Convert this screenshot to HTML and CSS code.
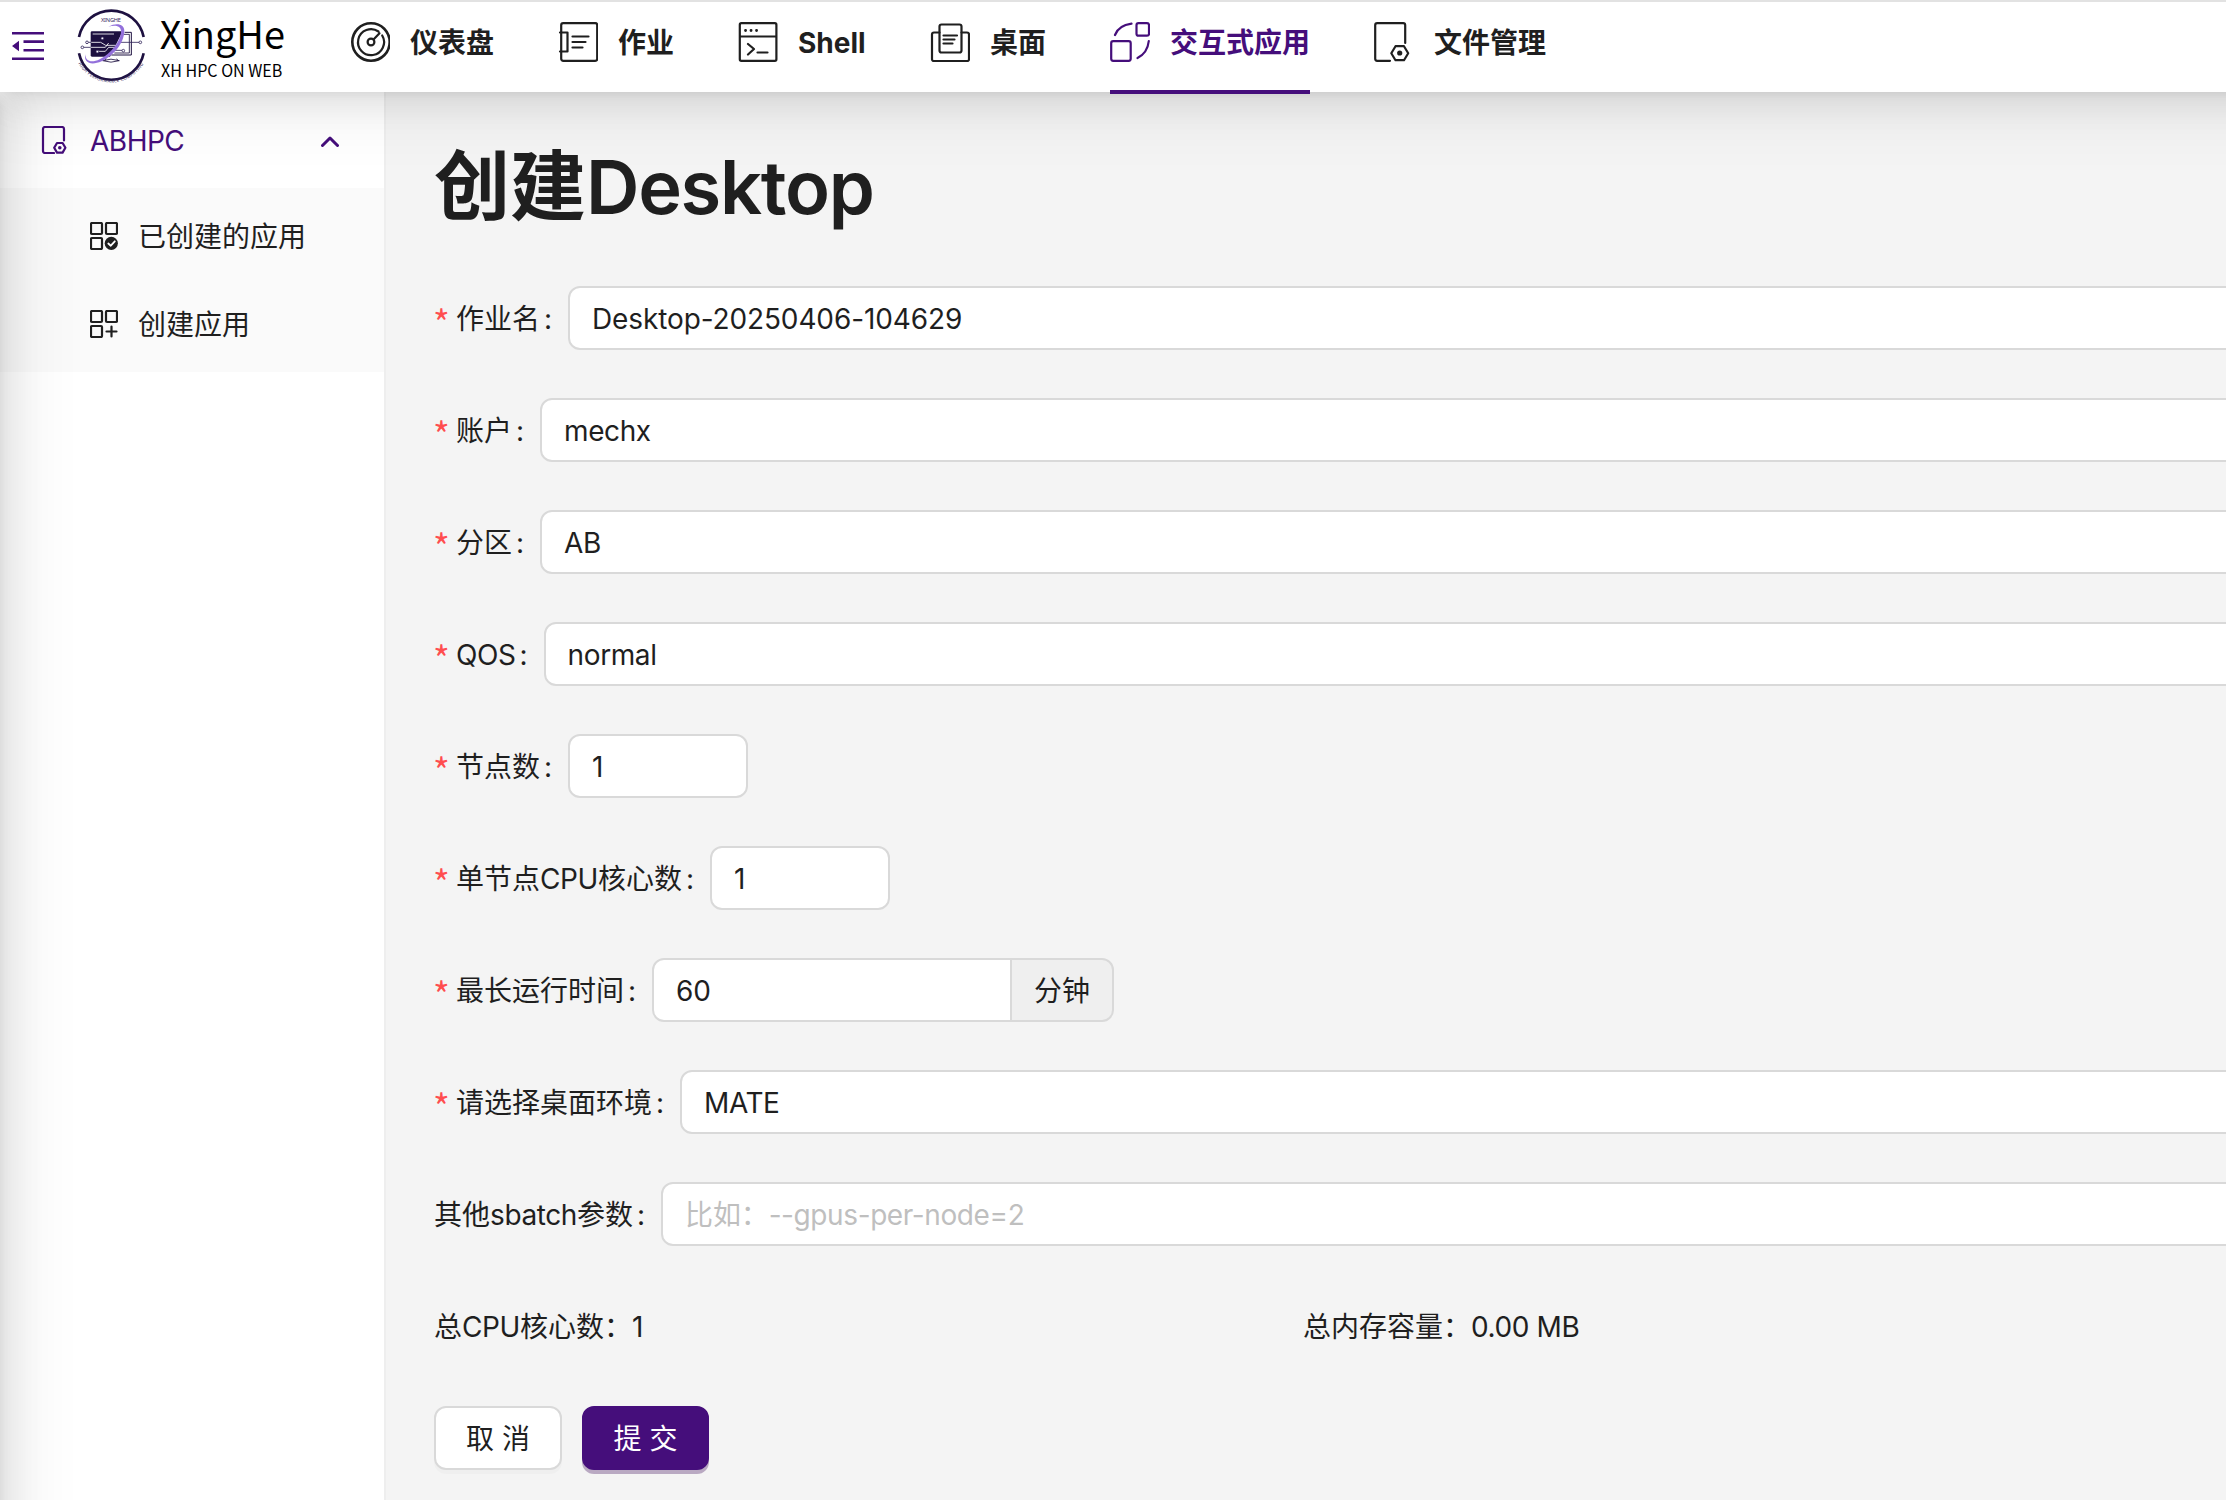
FILE: index.html
```html
<!DOCTYPE html>
<html lang="zh-CN">
<head>
<meta charset="utf-8">
<title>创建Desktop</title>
<link rel="stylesheet" href="styles.css">
</head>
<body>
<header class="header">
  <svg class="fold" width="32" height="28" viewBox="0 0 32 28" fill="currentColor"><path d="M0 0h32v2.600H0zM11.500 8.300H32V11H11.500zM11.500 17H32v2.600H11.500zM0 25.400h32V28H0zM0 14l7-5.200v10.400z"/></svg>
  <svg class="logo" width="210" height="80" viewBox="225 24 630 240">
    <g fill="none" stroke="#1d1040">
      <path d="M237 111A99 99 0 0 1 431 111M237 160A99 99 0 0 0 431 160" stroke-width="8"/>
      <path d="M374 97h20v68h-60" stroke-width="3"/>
      <path d="M366 103h22v56h-45M318 176l-3 6M350 176l4 6M308 182q25 9 50 0q-25-9-50 0" stroke-width="2.500"/>
    </g>
    <path d="M276 94h92l-38 76h-54q-4 0-4-4v-68q0-4 4-4z" fill="#1d1040"/>
    <g fill="none" stroke="#fff" stroke-width="2.500"><path d="M272 127h30l15 9h32M272 142h44l10-13M294 154h22l10-12h22M278 102h64"/></g>
    <g fill="#fff" stroke="#33265c" stroke-width="2.500"><path d="M264 127h10M250 142h22M360 127h58M330 151h36" fill="none"/><circle cx="261" cy="127" r="4"/><circle cx="247" cy="142" r="4"/><circle cx="421" cy="127" r="4"/><circle cx="370" cy="152" r="4"/><circle cx="307" cy="115" r="4"/><circle cx="292" cy="155" r="4"/></g>
    <path d="M325 80C350 66 374 72 373 94C372 130 340 168 305 184C275 197 250 190 256 163C256 184 274 190 299 178C333 160 360 126 363 98C365 80 351 73 325 80z" fill="#9370db"/>
    <text class="mark-text" x="333" y="67" font-size="17" text-anchor="middle" textLength="60">XINGHE</text>
    <path id="rim" d="M227 172A112 112 0 0 0 439 172" fill="none"/>
    <text class="mark-text" font-size="13"><textPath href="#rim" startOffset="20" textLength="236">HIGH PERFORMANCE COMPUTING</textPath></text>
    <text class="brand" x="479" y="148" font-size="115" textLength="376" lengthAdjust="spacingAndGlyphs">XingHe</text>
    <text class="brand" x="483" y="232" font-size="50" textLength="364" lengthAdjust="spacingAndGlyphs">XH HPC ON WEB</text>
  </svg>
  <nav class="nav">
    <a class="nav-item"><svg class="nav-icon" viewBox="-1 0 40 40"><circle cx="20" cy="20" r="18.700" stroke-width="2.600"/><path d="M27.500 9.500A13 13 0 1 0 31.200 13.500M22.500 17.500l6-6.200"/><circle cx="20" cy="20" r="3.400"/></svg><span>仪表盘</span></a>
    <a class="nav-item"><svg class="nav-icon" viewBox="-1 0 40 40"><rect x="2.200" y="1.200" width="36" height="37.600" rx="2"/><path d="M1 10.500h7.500v19H1M13.500 14.500h16M13.500 20h13M13.500 25.500h10"/></svg><span>作业</span></a>
    <a class="nav-item"><svg class="nav-icon" viewBox="0 0 40 40"><rect x="1.800" y="1.200" width="36.600" height="37.600" rx="1.500"/><path d="M2 14.500h36M10 22l6 5-6 5.500M19.500 30.500h10"/><path d="M7.500 8.500h.1M13 8.500h.1M18.500 8.500h.1" stroke-width="2.800"/></svg><span class="shell">Shell</span></a>
    <a class="nav-item"><svg class="nav-icon" viewBox="0 0 40 40"><rect x="9.500" y="2.500" width="22" height="28" rx="2"/><path d="M9.500 10.500H4a2 2 0 0 0-2 2V37a1.800 1.800 0 0 0 2 2h33a1.800 1.800 0 0 0 2-2V12.500a2 2 0 0 0-2-2h-5.500M13.500 13.500h13.500M13.500 17.500h11M13.500 21.500h9"/></svg><span>桌面</span></a>
    <a class="nav-item active"><svg class="nav-icon" viewBox="0 0 40 40"><rect x="26.500" y="1.200" width="12.500" height="12.500" rx="2"/><rect x="1.200" y="19.200" width="19.500" height="19.600" rx="2"/><path d="M5 13Q8.500 3.500 21.500 1.700M38.800 19Q37.500 31 27.500 36"/></svg><span>交互式应用</span></a>
    <a class="nav-item"><svg class="nav-icon" viewBox="3 0 40 40"><path d="M19 38.800H6.200a2 2 0 0 1-2-2V3.200a2 2 0 0 1 2-2h26a2 2 0 0 1 2 2V21M24.500 24.200h8.500l4.200 7-4.200 7h-8.500l-4.200-7z"/><circle cx="28.700" cy="31" r="2.600" class="fill"/></svg><span>文件管理</span></a>
  </nav>
</header>
<div class="body">
  <aside class="sidebar">
    <div class="menu-title">
      <svg class="menu-icon" viewBox="-1 0 28 28"><path d="M13 27H4a2 2 0 0 1-2-2V3a2 2 0 0 1 2-2h17a2 2 0 0 1 2 2v11.500M16 17h5.600l2.800 4.800-2.800 4.800h-5.600l-2.800-4.800z"/><circle cx="18.800" cy="21.800" r="1.800" class="fill"/></svg>
      <span class="cluster">ABHPC</span>
      <svg class="chevron" viewBox="0 0 18 12"><path d="M1.500 10.500L9 3l7.500 7.500"/></svg>
    </div>
    <div class="submenu">
      <div class="sub-item"><svg class="menu-icon" viewBox="0 0 28 28"><rect x="1" y="1" width="11" height="11" rx="1"/><rect x="16" y="1" width="11" height="11" rx="1"/><rect x="1" y="16" width="11" height="11" rx="1"/><circle cx="21.300" cy="21.300" r="6.600" class="fill"/><path d="M18.300 21.500l2.500 2.200 4-4.400" class="tick"/></svg><span>已创建的应用</span></div>
      <div class="sub-item"><svg class="menu-icon" viewBox="0 0 28 28"><rect x="1" y="1" width="11" height="11" rx="1"/><rect x="16" y="1" width="11" height="11" rx="1"/><rect x="1" y="16" width="11" height="11" rx="1"/><path d="M21.500 16.500v10M16.500 21.500h10"/></svg><span>创建应用</span></div>
    </div>
  </aside>
  <main class="main">
    <h1 class="title">创建<span class="title-latin">Desktop</span></h1>
    <form class="form">
      <div class="row"><label class="label required">作业名</label><div class="input wide job-name">Desktop-20250406-104629</div></div>
      <div class="row"><label class="label required">账户</label><div class="input wide latin">mechx</div></div>
      <div class="row"><label class="label required">分区</label><div class="input wide latin">AB</div></div>
      <div class="row"><label class="label required"><span class="latin">QOS</span></label><div class="input wide latin">normal</div></div>
      <div class="row"><label class="label required">节点数</label><div class="input number">1</div></div>
      <div class="row"><label class="label required">单节点<span class="latin">CPU</span>核心数</label><div class="input number">1</div></div>
      <div class="row"><label class="label required">最长运行时间</label><div class="input time">60</div><div class="addon">分钟</div></div>
      <div class="row"><label class="label required">请选择桌面环境</label><div class="input wide latin">MATE</div></div>
      <div class="row"><label class="label">其他<span class="latin">sbatch</span>参数</label><div class="input wide placeholder">比如：<span class="latin">--gpus-per-node=2</span></div></div>
      <div class="totals"><div>总<span class="latin">CPU</span>核心数：1</div><div>总内存容量：<span class="latin">0.00 MB</span></div></div>
      <div class="actions"><div class="btn">取 消</div><div class="btn primary">提 交</div></div>
    </form>
  </main>
</div>
</body>
</html>
```
FILE: styles.css
```css
* { box-sizing: border-box; }
html, body { margin: 0; height: 1500px; overflow: hidden; }
body {
  display: flex; flex-direction: column;
  font: 28px/44px Inter, "Noto Sans CJK SC", sans-serif;
  color: #1f1f1f; background: #f4f4f4; white-space: nowrap;
}
svg { flex: none; }
.header {
  flex: none; height: 92px; margin-right: -120px; border-top: 2px solid #e2e2e2; background: #fff;
  display: flex; align-items: flex-start; position: relative; z-index: 2;
  box-shadow: 0 12px 32px rgba(0,0,0,.08), 0 6px 12px -8px rgba(0,0,0,.12), 0 18px 56px 16px rgba(0,0,0,.05);
}
.fold { margin: 30px 0 0 12px; color: #450e7b; }
.logo { margin: 6px 0 0 31px; overflow: visible; }
.brand { font-family: "Noto Sans CJK SC", sans-serif; fill: #000; }
.mark-text { font-family: "Noto Sans", sans-serif; fill: #33265c; }
.nav { display: flex; gap: 64px; margin-left: 65px; height: 92px; }
.nav-item {
  display: flex; align-items: center; gap: 20px; height: 92px;
  padding-bottom: 8px; border-bottom: 4px solid transparent; font-weight: 700;
}
.nav-item span { padding-top: 1px; }
.nav-item.active { color: #450e7b; border-color: #450e7b; }
.nav-icon { width: 40px; height: 40px; }
.nav-icon, .menu-icon, .chevron { fill: none; stroke: currentColor; stroke-width: 2.2; stroke-linecap: round; stroke-linejoin: round; }
.fill { fill: currentColor; stroke: none; }
.tick { stroke: #fff; stroke-width: 1.8; }
.shell { width: 68px; }
.body { flex: 1; display: flex; min-height: 0; }
.sidebar {
  flex: none; width: 386px; background: #fff; border-right: 2px solid #eee;
  position: relative; overflow: hidden;
}
.sidebar::before {
  content: ""; position: absolute; left: -40px; top: 0; width: 40px; height: 1500px;
  box-shadow: 12px 0 32px rgba(0,0,0,.08), 6px 0 12px -8px rgba(0,0,0,.12), 18px 0 56px 16px rgba(0,0,0,.05);
}
.menu-title { height: 96px; padding: 0 45px 0 40px; display: flex; align-items: center; color: #450e7b; }
.menu-icon { width: 28px; height: 28px; }
.cluster { margin-left: 22px; padding-top: 1px; letter-spacing: -.5px; }
.chevron { width: 18px; height: 12px; margin-left: auto; margin-top: 1px; stroke-width: 3; }
.submenu { background: #fafafa; height: 184px; padding: 4px 0 0 90px; }
.sub-item { display: flex; align-items: center; gap: 20px; height: 88px; }
.sub-item span { padding-top: 2px; }
.main { flex: 1; min-width: 0; padding: 50px 0 0 48px; overflow: hidden; }
.title { margin: 0; height: 92px; font-size: 76px; line-height: 88px; font-weight: 600; }
.title-latin { font-size: 74px; letter-spacing: -1.3px; }
.form { padding-top: 52px; margin-right: -24px; display: flex; flex-direction: column; gap: 48px; }
.row { display: flex; height: 64px; align-items: center; }
.label { flex: none; display: flex; align-items: center; padding-top: 2px; }
.label::after { content: ":"; width: 24px; padding-left: 4px; }
.required::before { content: "*"; width: 23px; margin-left: -1px; padding-top: 3px; font-size: 36px; color: #ff4d4f; font-family: "Noto Sans CJK SC", sans-serif; }
.input { height: 64px; border: 2px solid #d9d9d9; border-radius: 12px; background: #fff; padding: 9px 22px 0; letter-spacing: -.12px; }
.latin { letter-spacing: -.4px; }
.wide { flex: 1; }
.number { width: 180px; }
.time { width: 360px; border-radius: 12px 0 0 12px; }
.addon { height: 64px; width: 104px; margin-left: -2px; padding: 9px 22px 0; border: 2px solid #d9d9d9; border-radius: 0 12px 12px 0; background: #efefef; }
.placeholder { color: #bfbfbf; }
.totals { display: grid; grid-template-columns: 869px 869px; height: 64px; align-items: center; padding-top: 2px; }
.actions { display: flex; gap: 20px; }
.btn { width: 128px; height: 64px; padding: 9px 0 0; text-align: center; border: 2px solid #d9d9d9; border-radius: 12px; background: #fff; box-shadow: 0 4px 0 rgba(0,0,0,.02); }
.primary { width: 127px; color: #fff; background: #450e7b; border-color: #450e7b; box-shadow: 0 4px 0 #b9a9c2; }
```
